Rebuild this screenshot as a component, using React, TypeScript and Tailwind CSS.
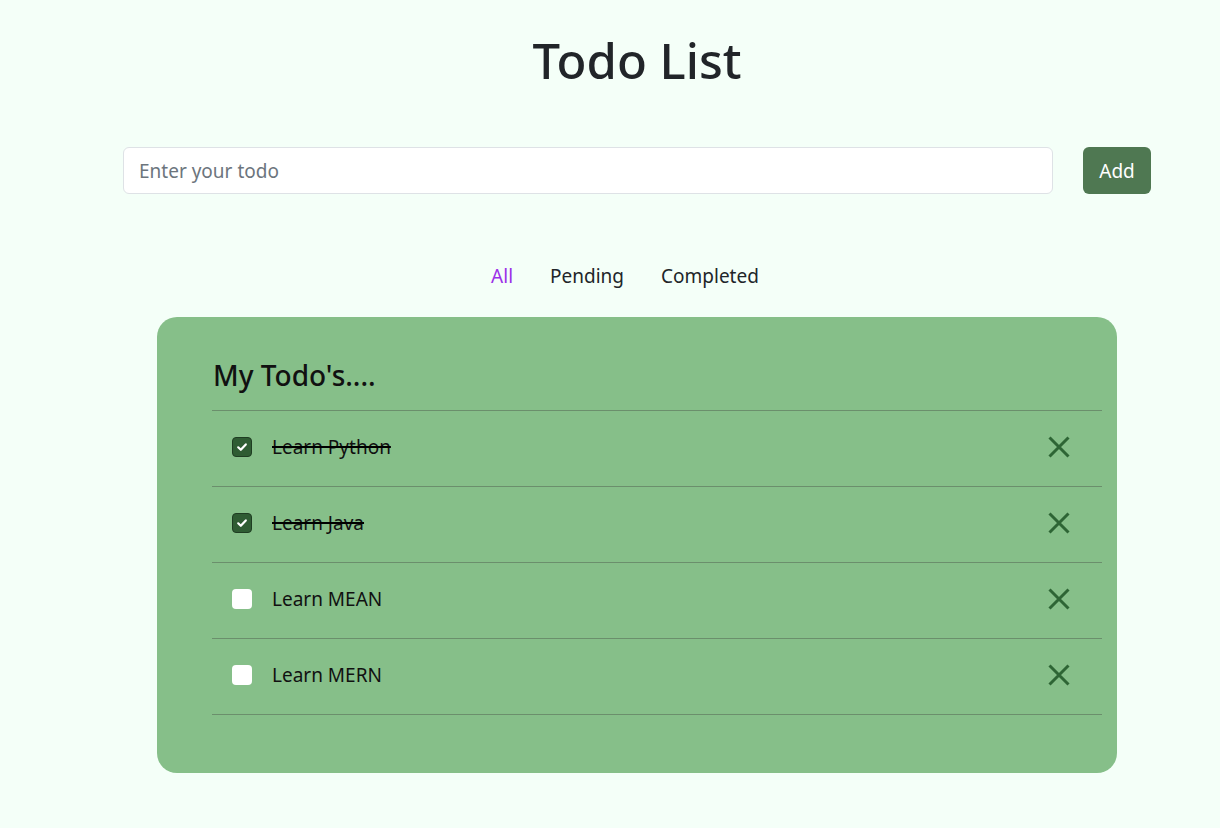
import React, { useState } from 'react';

type Todo = { id: number; text: string; done: boolean };

const initialTodos: Todo[] = [
  { id: 1, text: 'Learn Python', done: true },
  { id: 2, text: 'Learn Java', done: true },
  { id: 3, text: 'Learn MEAN', done: false },
  { id: 4, text: 'Learn MERN', done: false },
];

const filters = ['All', 'Pending', 'Completed'];

const App = () => {
  const [todos, setTodos] = useState<Todo[]>(initialTodos);
  const [filter, setFilter] = useState('All');
  const [text, setText] = useState('');

  const toggle = (id: number) =>
    setTodos(todos.map((t) => (t.id === id ? { ...t, done: !t.done } : t)));

  const remove = (id: number) => setTodos(todos.filter((t) => t.id !== id));

  const add = () => {
    if (!text.trim()) return;
    setTodos([...todos, { id: Date.now(), text: text.trim(), done: false }]);
    setText('');
  };

  const shown = todos.filter((t) =>
    filter === 'Pending' ? !t.done : filter === 'Completed' ? t.done : true
  );

  return (
    <div
      className="min-h-[828px] bg-[#f4fff8] text-[#212529]"
      style={{ fontFamily: '"Noto Sans", "Open Sans", sans-serif' }}
    >
      <h1 className="pl-[54px] pt-[24px] text-center text-[49px] font-medium leading-[72px]">Todo List</h1>

      {/* Input row */}
      <div className="mt-[51px] flex items-center pl-[123px] pr-[69px]">
        <input
          value={text}
          onChange={(e) => setText(e.target.value)}
          placeholder="Enter your todo"
          className="h-[47px] flex-1 rounded-md border border-[#dee2e6] bg-white px-[15px] text-[19px] outline-none placeholder-[#6c757d]"
        />
        <button
          onClick={add}
          className="ml-[30px] h-[47px] w-[68px] rounded-md bg-[#4f7852] pt-[2px] text-[19px] text-white"
        >
          Add
        </button>
      </div>

      {/* Filters */}
      <div className="mt-[68px] flex justify-center gap-[37px] pl-[30px] text-[19px]">
        {filters.map((f) => (
          <button
            key={f}
            onClick={() => setFilter(f)}
            className={filter === f ? 'text-[#9b30e8]' : 'text-[#212529]'}
          >
            {f}
          </button>
        ))}
      </div>

      {/* Card */}
      <div className="ml-[157px] mt-[26px] w-[960px] rounded-[20px] bg-[#86bf89] pb-[58px] pl-[55px] pr-[15px] pt-[38px]">
        <h2 className="pl-[1px] text-[28px] font-medium leading-[40px] text-[#111]">My Todo's....</h2>
        <div className="mt-[15px] border-t border-[#6b8f6c]">
          {shown.map((t) => (
            <TodoRow key={t.id} todo={t} onToggle={() => toggle(t.id)} onRemove={() => remove(t.id)} />
          ))}
        </div>
      </div>
    </div>
  );
};

const TodoRow = ({ todo, onToggle, onRemove }: { todo: Todo; onToggle: () => void; onRemove: () => void }) => (
  <div className="flex h-[76px] items-center border-b border-[#6b8f6c] pb-[2px] pl-[20px] pr-[31px]">
    <button
      onClick={onToggle}
      className={`flex h-[20px] w-[20px] items-center justify-center rounded-[4px] ${
        todo.done ? 'border border-[#1f3d22] bg-[#2f5c33]' : 'bg-white'
      }`}
    >
      {todo.done && (
        <svg width="12" height="12" viewBox="0 0 12 12" fill="none">
          <path d="M2.2 6.3 4.8 8.8 9.8 3.4" stroke="white" strokeWidth="2.2" strokeLinecap="round" strokeLinejoin="round" />
        </svg>
      )}
    </button>
    <span className={`ml-[20px] flex-1 text-[19px] text-[#111] ${todo.done ? 'line-through decoration-[2px] decoration-black' : ''}`}>
      {todo.text}
    </span>
    <button onClick={onRemove} className="text-[#2e6535]">
      <svg width="24" height="24" viewBox="0 0 24 24" fill="none">
        <path d="M2.5 2.5 21.5 21.5M21.5 2.5 2.5 21.5" stroke="currentColor" strokeWidth="3" />
      </svg>
    </button>
  </div>
);

export default App;
